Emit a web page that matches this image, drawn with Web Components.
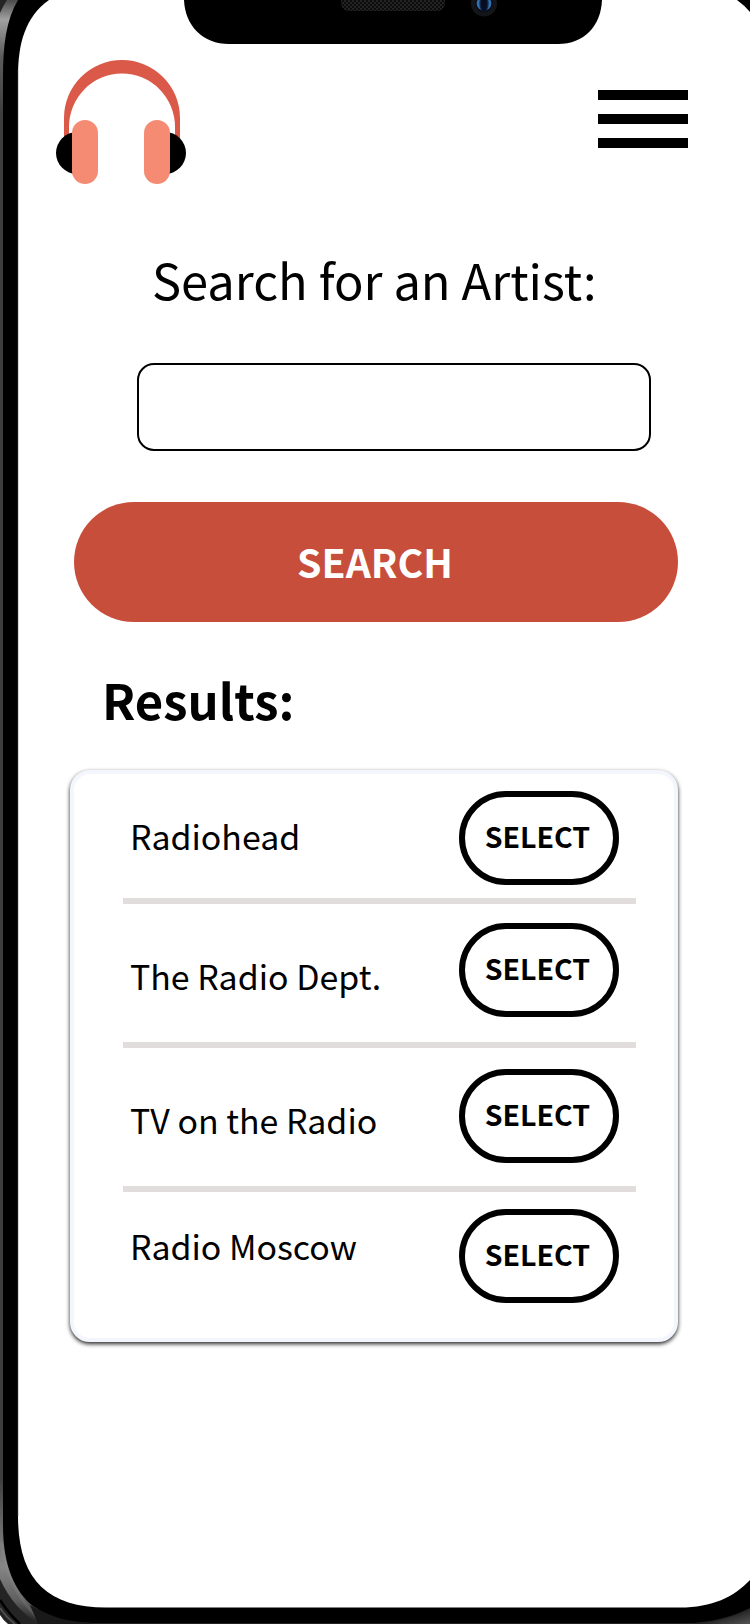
<!DOCTYPE html>
<html lang="en">
<head>
<meta charset="utf-8">
<title>Search for an Artist</title>
<style>
html,body{margin:0;padding:0;background:#fff}
body{width:750px;height:1624px;overflow:hidden;font-family:"Noto Sans CJK SC","Noto Sans",sans-serif;color:#000}
</style>
</head>
<body>
<phone-frame>
  <app-header></app-header>
  <search-panel></search-panel>
  <results-card>
    <artist-row style="--h:124px;--name:42px;--btn:17px">Radiohead</artist-row>
    <artist-row style="--h:138px;--name:52px;--btn:19px">The Radio Dept.</artist-row>
    <artist-row style="--h:138px;--name:52px;--btn:21px">TV on the Radio</artist-row>
    <artist-row style="--h:146px;--name:34px;--btn:17px;--line:0px">Radio Moscow</artist-row>
  </results-card>
</phone-frame>
<script>
const define = (name, html) => customElements.define(name, class extends HTMLElement {
  constructor() {
    super();
    this.attachShadow({mode: "open"}).innerHTML = html;
  }
});

define("phone-frame", `
<style>
:host{display:block;position:relative;width:750px;height:1624px;overflow:hidden}
svg{position:absolute;inset:0;display:block}
main{position:relative;display:flex;flex-direction:column}
</style>
<svg width="750" height="1624" viewBox="0 0 750 1624" aria-hidden="true">
  <defs>
    <linearGradient id="rim" gradientUnits="userSpaceOnUse" x1="0" y1="0" x2="0" y2="1624">
      <stop offset="0" stop-color="#4a4a4a"/><stop offset=".012" stop-color="#a0a0a0"/><stop offset=".035" stop-color="#5c5c5c"/>
      <stop offset=".07" stop-color="#3e3e3e"/><stop offset=".91" stop-color="#3e3e3e"/><stop offset=".945" stop-color="#707070"/><stop offset=".965" stop-color="#858585"/>
      <stop offset=".985" stop-color="#606060"/><stop offset=".997" stop-color="#2c2c2c"/><stop offset="1" stop-color="#222"/>
    </linearGradient>
    <linearGradient id="corner" x1="0" y1="0" x2="1" y2="1"><stop offset=".3" stop-color="#111"/><stop offset="1" stop-color="#555"/></linearGradient>
    <pattern id="mesh" width="4" height="4" patternUnits="userSpaceOnUse"><rect width="4" height="4" fill="#0c0c0c"/><path d="M0 0h2v2h-2zM2 2h2v2h-2z" fill="#232323"/></pattern>
    <filter id="soft" x="-20%" y="-5%" width="140%" height="110%"><feGaussianBlur stdDeviation="1.3"/></filter>
  </defs>
  <path d="M0 0H750V1624H8Q3 1620 0 1615Z" fill="#242424"/>
  <path d="M0 1600Q8 1613 20 1624" fill="none" stroke="#000" stroke-width="2.5"/>
  <path d="M0 1608Q6 1617 15 1624" fill="none" stroke="#514d4e" stroke-width="2"/>
  <path d="M0 13Q3 6 7 0H60V1624H40Q14 1610 0 1579Z" fill="url(#rim)"/>
  <path d="M1 1541C6 1573 18 1603 46 1625" fill="none" stroke="#999" stroke-width="2" opacity=".4" filter="url(#soft)"/>
  <path d="M30 1605Q58 1621 96 1624H38Z" fill="#191919"/>
  <path d="M18 0C6 20 3 46 3 76V1526C3 1566 15 1592 33 1606C50 1617 70 1623 100 1623H694C716 1621 734 1616 750 1608V0Z" fill="#000"/>
  <path d="M700 1624Q730 1620 750 1609V1624Z" fill="url(#corner)"/>
  <path d="M49 0C25 17 18 44 18 76V1516C18 1578 46 1607.5 106 1607.5H680C712 1607.5 734 1597 750 1580V12Q744 5 737 0Z" fill="#fff"/>
  <path d="M18.3 70V1516" stroke="#b5b5b5" stroke-width=".7"/>
  <path d="M184 0C185 26 203 44 229 44H558C584 44 601 26 602 0Z" fill="#000"/>
  <rect x="341" y="-12" width="104" height="23" rx="8" fill="url(#mesh)"/>
  <circle cx="484" cy="3.5" r="13" fill="#141518"/><circle cx="484" cy="3.5" r="9" fill="#0b0d18"/>
  <ellipse cx="484" cy="3.5" rx="7.4" ry="7.2" fill="#3070ae"/><ellipse cx="484" cy="3.5" rx="4.6" ry="8" fill="#122448"/><ellipse cx="484" cy="3.5" rx="3" ry="8" fill="#090d20"/>
</svg>
<main><slot></slot></main>`);

define("headphone-logo", `
<style>:host{display:block;width:130px;height:124px}svg{display:block}</style>
<svg width="130" height="124" viewBox="56 60 130 124" aria-hidden="true">
  <path d="M64 140V118A58 58 0 0 1 180 118V140H175V127A53 53.5 0 0 0 69 127V140Z" fill="#da5949"/>
  <circle cx="77" cy="153" r="21" fill="#000"/><circle cx="165" cy="153" r="21" fill="#000"/>
  <path d="M85 132h72v42H85z" fill="#fff"/>
  <rect x="72" y="120" width="26" height="64" rx="13" fill="#f58b73"/>
  <rect x="144" y="120" width="26" height="64" rx="13" fill="#f58b73"/>
</svg>`);

define("menu-button", `
<style>
:host{display:block}
button{all:unset;display:grid;gap:14px;width:90px}
i{height:10px;background:#000}
</style>
<button aria-label="Menu"><i></i><i></i><i></i></button>`);

define("app-header", `
<style>:host{display:flex;box-sizing:border-box;height:184px;padding:60px 62px 0 56px;justify-content:space-between;align-items:flex-start}
menu-button{margin-top:30px}</style>
<headphone-logo></headphone-logo><menu-button></menu-button>`);

define("search-panel", `
<style>
:host{display:block}
h1{margin:60px 0 0 152px;font-size:48.8px;line-height:70px;font-weight:400;white-space:nowrap}
input{display:block;box-sizing:border-box;width:514px;height:88px;margin:49px 0 0 137px;border:2px solid #000;border-radius:17px;background:#fff;outline:0;padding:0 20px;font:34px inherit}
button{display:block;box-sizing:border-box;width:604px;height:120px;margin:51px 0 0 74px;padding:0 2px 3px 0;border:0;border-radius:60px;background:#c84e3c;color:#fff;font:700 39.2px/60px "Noto Sans CJK SC",sans-serif}
</style>
<h1>Search for an Artist:</h1>
<input aria-label="Artist">
<button>SEARCH</button>`);

define("results-card", `
<style>
:host{display:block}
h2{margin:42px 0 0 102px;font-size:49px;line-height:70px;font-weight:700}
section{box-sizing:border-box;width:608px;height:572px;margin:36px 0 0 70px;padding:0 38px 0 49px;border:4px solid #f4f6fd;border-radius:20px;background:#fff;box-shadow:0 2px 4px rgba(0,0,0,.85)}
</style>
<h2>Results:</h2>
<section><slot></slot></section>`);

define("artist-row", `
<style>
:host{display:flex;justify-content:space-between;align-items:flex-start;height:var(--h);padding:0 17px 0 7px;border-bottom:var(--line,6px) solid #e1dddd}
span{margin-top:var(--name);font-size:33.9px;line-height:40px;white-space:nowrap}
select-button{margin-top:var(--btn)}
</style>
<span><slot></slot></span><select-button></select-button>`);

define("select-button", `
<style>
:host{display:block}
button{display:block;box-sizing:border-box;width:160px;height:94px;border:6px solid #000;border-radius:47px;background:#fff;color:#000;padding:0 3px 4px 0;font:700 28.5px/40px "Noto Sans CJK SC",sans-serif}
</style>
<button>SELECT</button>`);
</script>
</body>
</html>
